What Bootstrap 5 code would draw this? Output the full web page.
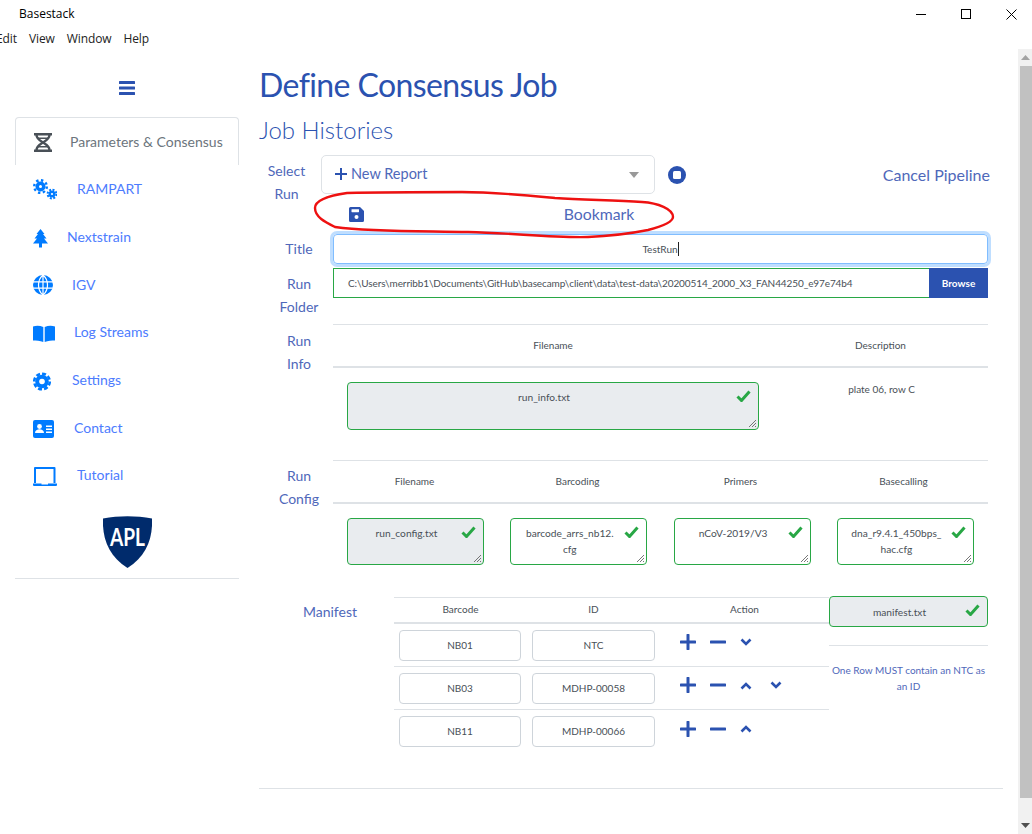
<!DOCTYPE html>
<html lang="en">
<head>
    <meta charset="UTF-8">
    <title>Basestack</title>
    <link href="https://cdn.jsdelivr.net/npm/bootstrap@5.3.0/dist/css/bootstrap.min.css" rel="stylesheet">
    <style>
        html, body {
            height: 834px;
            overflow: hidden;
        }
        body {
            font-family: Lato, sans-serif;
            background: #fff;
            color: #495057;
            font-size: 12px;
        }
        .win-title {
            height: 28px;
            font-family: "Open Sans", sans-serif;
            font-size: 12px;
            color: #000;
            padding-left: 19px;
        }
        .win-btns svg {
            display: block;
        }
        .win-btns {
            gap: 34px;
            margin-right: 15px;
        }
        .win-menu {
            height: 21px;
            font-family: "Open Sans", sans-serif;
            font-size: 12px;
            letter-spacing: -.1px;
            color: #222;
            margin-left: -4px;
            gap: 12px;
        }
        .app-area {
            height: 785px;
        }
        .scroll-track {
            width: 14px;
            background: #f1f1f1;
            margin-left: auto;
        }
        .scroll-arrow {
            height: 17px;
            flex: none;
        }
        .scroll-thumb {
            margin-left: 2px;
            height: 732px;
            background: #c1c1c1;
        }
        /* sidebar */
        .side-col {
            width: 224px;
            margin-left: 15px;
            flex: none;
        }
        .burger {
            height: 68px;
            padding-top: 9px;
        }
        .side-item {
            height: 47.7px;
            color: #4d7cfe;
            font-size: 14px;
        }
        .side-item svg {
            fill: #007bff;
        }
        .side-first {
            height: 48px;
            border: 1px solid #dee2e6;
            border-bottom: 0;
            border-radius: 4px 4px 0 0;
            color: #6c757d;
        }
        .side-ico {
            width: 40px;
            margin-left: 18px;
            flex: none;
        }
        .logo-box {
            height: 63px;
            margin-top: 17px;
            border-bottom: 1px solid #dee2e6;
        }
        /* main */
        .main-col {
            width: 744px;
            margin-left: 20px;
            flex: none;
        }
        .page-head {
            font-size: 32px;
            font-weight: 400;
            letter-spacing: -.6px;
            color: #2b52b0;
            margin: 12px 0 0;
            line-height: 48px;
        }
        .sub-head {
            font-size: 24px;
            font-weight: 300;
            color: #2b52b0;
            margin: 3px 0 0;
            line-height: 36px;
        }
        .lbl {
            color: #4f68ba;
            font-size: 14px;
            line-height: 23px;
            text-align: center;
        }
        .select-row {
            margin-top: 7px;
            height: 39px;
        }
        .select-box {
            width: 334px;
            height: 39px;
            margin-left: 13px;
            border: 1px solid #dee2e6;
            border-radius: 5px;
            padding: 0 15px 2px 13px;
            font-size: 14.5px;
            color: #4f68ba;
        }
        .caret-down {
            width: 0;
            height: 0;
            border: 5.5px solid transparent;
            border-top: 6px solid #999;
            border-bottom: 0;
            margin-top: 2px;
        }
        .bookmark-row {
            height: 40px;
            margin-left: 74px;
            padding-left: 16px;
            width: 655px;
            color: #4f68ba;
            font-size: 15.8px;
        }
        .bookmark-row span {
            margin-left: 185px;
            width: 100px;
            text-align: center;
        }
        .field-lbl {
            width: 80px;
            margin-right: -6px;
            flex: none;
        }
        .field-title {
            height: 30px;
            width: 655px;
            border: 1px solid #80bdff;
            box-shadow: 0 0 0 3px rgba(0, 123, 255, .25);
            border-radius: 4px;
            font-size: 10px;
        }
        .text-caret {
            display: inline-block;
            width: 1px;
            height: 14px;
            background: #222;
            vertical-align: -3px;
        }
        .field-path {
            height: 30px;
            width: 655px;
            border: 1px solid #28a745;
            font-size: 10px;
            letter-spacing: -.1px;
            padding-left: 14px;
        }
        .browse-btn {
            width: 59px;
            height: 30px;
            margin: -1px -1px -1px auto;
            background: #2b52b0;
            color: #fff;
            font-size: 10px;
            font-weight: 700;
            border: 0;
            border-radius: 0;
            padding: 0;
        }
        .grid-line {
            border-top: 1px solid #dee2e6;
        }
        .grid-thick {
            border-top: 2px solid #dee2e6;
        }
        .head-row {
            height: 42px;
            font-size: 10px;
        }
        .file-box {
            position: relative;
            border: 1px solid #28a745;
            border-radius: 4px;
            font-size: 10.2px;
            line-height: 16px;
            text-align: center;
            padding: 6px 24px 0 6px;
        }
        .file-grey {
            background: #e9ecef;
        }
        .file-box .tick {
            position: absolute;
            top: 7px;
            right: 7px;
        }
        .file-box .grip {
            position: absolute;
            right: 1px;
            bottom: 1px;
        }
        .cfg-box {
            width: 137px;
            height: 47px;
            flex: none;
        }
        .manifest-input {
            height: 31px;
            border: 1px solid #ced4da;
            border-radius: 4px;
            font-size: 10px;
        }
        .input-code {
            width: 122px;
            margin-left: 5px;
        }
        .input-id {
            width: 123px;
            margin-left: 11px;
        }
        .tbl-row {
            height: 43px;
            border-bottom: 1px solid #dee2e6;
        }
        .tbl-row-last {
            border-bottom: 0;
        }
        .act-cell {
            margin-left: 25px;
            margin-bottom: 6px;
        }
        .act-slot {
            width: 30px;
            height: 31px;
        }
        .note-txt {
            font-size: 10px;
            line-height: 16px;
            color: #4f68ba;
            text-align: center;
        }
        .scribble {
            position: absolute;
            left: 313px;
            top: 189px;
            pointer-events: none;
        }
    </style>
</head>
<body>

<div class="win-title d-flex align-items-center">
    <span>Basestack</span>
    <div class="win-btns d-flex align-items-center ms-auto">
        <svg width="11" height="11" viewBox="0 0 11 11"><path d="M0 5.5h10" stroke="#000" fill="none"/></svg>
        <svg width="11" height="11" viewBox="0 0 11 11"><rect x=".5" y=".5" width="9" height="9" stroke="#000" fill="none"/></svg>
        <svg width="11" height="11" viewBox="0 0 11 11"><path d="M.5.5l10 10M10.500.5l-10 10" stroke="#000" fill="none"/></svg>
    </div>
</div>
<div class="win-menu d-flex align-items-center">
    <span>Edit</span><span>View</span><span>Window</span><span>Help</span>
</div>

<div class="app-area d-flex">
    <!-- sidebar -->
    <div class="side-col">
        <div class="burger d-flex justify-content-center align-items-center">
            <svg width="16" height="14" viewBox="0 0 16 14" fill="#2b52b0"><rect y="0" width="16" height="3" rx=".5"/><rect y="5.500" width="16" height="3" rx=".5"/><rect y="11" width="16" height="3" rx=".5"/></svg>
        </div>
        <div class="side-item side-first d-flex align-items-center">
            <div class="side-ico"><svg width="18" height="19" viewBox="0 0 18 19" style="fill:none" stroke="#495057"><path stroke-width="2.400" d="M0 1.300h18M0 17.700h18M2.500 2C2.500 9.500 15.500 9.500 15.500 17M15.500 2C15.500 9.500 2.500 9.500 2.500 17"/><path stroke-width="1.400" d="M4 5.200h10M4 13.800h10"/></svg></div>
            <span style="margin-left:-4px">Parameters &amp; Consensus</span>
        </div>
        <div class="side-item d-flex align-items-center">
            <div class="side-ico"><svg width="24" height="21" viewBox="0 0 24 21"><circle cx="7.500" cy="7.500" r="5"/><circle cx="7.500" cy="7.500" r="6.300" fill="none" stroke="#007bff" stroke-width="2.400" stroke-dasharray="2.400 2.500"/><circle cx="7.500" cy="7.500" r="1.500" fill="#fff"/><circle cx="19" cy="15" r="3.500"/><circle cx="19" cy="15" r="4.400" fill="none" stroke="#007bff" stroke-width="2" stroke-dasharray="2 1.450"/><circle cx="19" cy="15" r="1.100" fill="#fff"/></svg></div>
            <span style="margin-left:4px">RAMPART</span>
        </div>
        <div class="side-item d-flex align-items-center">
            <div class="side-ico"><svg width="15" height="19" viewBox="0 0 15 19"><path d="M7.500 0l4 5h-1.500l3.500 4.500H11l4 5H9v4H6v-4H0l4-5H1.500L5 5H3.500z"/></svg></div>
            <span style="margin-left:-6px">Nextstrain</span>
        </div>
        <div class="side-item d-flex align-items-center">
            <div class="side-ico"><svg width="20" height="20" viewBox="0 0 20 20"><circle cx="10" cy="10" r="10"/><path d="M0 6.800h20M0 13.200h20M10 0c-6 5-6 15 0 20M10 0c6 5 6 15 0 20M10 0v20" stroke="#fff" stroke-width="1.200" fill="none"/></svg></div>
            <span style="margin-left:-1px">IGV</span>
        </div>
        <div class="side-item d-flex align-items-center">
            <div class="side-ico"><svg width="22" height="17" viewBox="0 0 22 17"><path d="M0 1.500C3 .5 7 .5 10.300 2v15C7 15.800 3 15.500 0 15.500zM22 1.500C19 .5 15 .5 11.700 2v15c3.300-1.200 7.300-1.500 10.300-1.500z"/></svg></div>
            <span style="margin-left:1px">Log Streams</span>
        </div>
        <div class="side-item d-flex align-items-center">
            <div class="side-ico"><svg width="18" height="19" viewBox="0 0 18 19"><circle cx="9" cy="9.500" r="6.800"/><circle cx="9" cy="9.500" r="7.800" fill="none" stroke="#007bff" stroke-width="2.600" stroke-dasharray="4 2.100"/><circle cx="9" cy="9.500" r="2.800" fill="#fff"/></svg></div>
            <span style="margin-left:-1px">Settings</span>
        </div>
        <div class="side-item d-flex align-items-center">
            <div class="side-ico"><svg width="21" height="18" viewBox="0 0 21 18"><rect width="21" height="18" rx="2"/><circle cx="6.500" cy="6.500" r="2.400" fill="#fff"/><path d="M2 13c0-5 9-5 9 0zM13 5.500h6v1.400h-6zM13 8.500h6v1.400h-6zM13 11.500h6v1.400h-6z" fill="#fff"/></svg></div>
            <span style="margin-left:1px">Contact</span>
        </div>
        <div class="side-item d-flex align-items-center">
            <div class="side-ico"><svg width="24" height="19" viewBox="0 0 24 19"><path d="M2 0h19.500a1 1 0 0 1 1 1v15h-2V2H3v14H1V1a1 1 0 0 1 1-1zM0 16.500h8.500v1H15v-1h9V18a1 1 0 0 1-1 1H1a1 1 0 0 1-1-1z"/></svg></div>
            <span style="margin-left:4px">Tutorial</span>
        </div>
        <div class="logo-box d-flex justify-content-center">
            <svg width="49" height="52" viewBox="0 0 49 52">
                <path d="M0 2.500C16-.5 33-.5 49 2.500c1 20-6 38-24.500 49.500C6 40.500-1 22.500 0 2.500z" fill="#002b6c"/>
                <text x="24.500" y="30" text-anchor="middle" fill="#fff" font-family="Lato, sans-serif" font-size="25" font-weight="700" textLength="35" lengthAdjust="spacingAndGlyphs">APL</text>
            </svg>
        </div>
    </div>

    <!-- main content -->
    <div class="main-col">
        <h1 class="page-head">Define Consensus Job</h1>
        <h3 class="sub-head">Job Histories</h3>

        <div class="select-row d-flex align-items-center">
            <div class="lbl" style="margin-left:6px;width:43px;padding-top:14px">Select Run</div>
            <div class="select-box d-flex align-items-center">
                <svg width="12" height="12" viewBox="0 0 12 12" class="me-1"><path d="M6 0v12M0 6h12" stroke="#2b52b0" stroke-width="2"/></svg>
                <span>New Report</span>
                <div class="caret-down ms-auto"></div>
            </div>
            <svg class="me-auto" width="18" height="18" viewBox="0 0 18 18" style="margin-left:13px"><circle cx="9" cy="9" r="9" fill="#2b52b0"/><rect x="5" y="5" width="8" height="8" rx="1.500" fill="#fff"/></svg>
            <span class="lbl" style="font-size:16px;margin-right:13px">Cancel Pipeline</span>
        </div>

        <div class="bookmark-row d-flex align-items-center">
            <svg width="15" height="15" viewBox="0 0 15 15"><path d="M1.500 0H11l4 4v9.500a1.500 1.500 0 0 1-1.500 1.500h-12A1.500 1.500 0 0 1 0 13.500v-12A1.500 1.500 0 0 1 1.500 0z" fill="#2b52b0"/><rect x="2.500" y="2.200" width="7.500" height="3" rx=".4" fill="#fff"/><circle cx="7.500" cy="10" r="2" fill="#fff"/></svg>
            <span>Bookmark</span>
        </div>

        <div class="d-flex">
            <div class="field-lbl lbl" style="line-height:30px">Title</div>
            <div class="field-title d-flex align-items-center justify-content-center"><span>TestRun<i class="text-caret"></i></span></div>
        </div>
        <div class="d-flex" style="margin-top:4px;height:56px">
            <div class="field-lbl lbl" style="padding-top:4px">Run<br>Folder</div>
            <div class="field-path d-flex align-items-center">
                <span>C:\Users\merribb1\Documents\GitHub\basecamp\client\data\test-data\20200514_2000_X3_FAN44250_e97e74b4</span>
                <button class="btn browse-btn" type="button">Browse</button>
            </div>
        </div>

        <!-- run info -->
        <div class="d-flex" style="height:136px">
            <div class="field-lbl lbl" style="padding-top:5px">Run<br>Info</div>
            <div style="width:655px">
                <div class="grid-line d-flex head-row align-items-center text-center">
                    <div style="width:440px">Filename</div>
                    <div class="flex-grow-1">Description</div>
                </div>
                <div class="grid-thick d-flex" style="padding:14px 0 0 14px">
                    <div class="file-box file-grey" style="width:412px;height:48px">
                        run_info.txt
                        <svg class="tick" width="15" height="12" viewBox="0 0 15 12"><path d="M1.500 6.500l4 4 8-9" stroke="#28a745" stroke-width="3" fill="none"/></svg>
                        <svg class="grip" width="9" height="9" viewBox="0 0 9 9"><path d="M8 1L1 8M8 4L4 8M8 7L7 8" stroke="#555" stroke-width=".8"/></svg>
                    </div>
                    <div class="flex-grow-1 text-center ps-3" style="font-size:10px;line-height:14px">plate 06, row C</div>
                </div>
            </div>
        </div>

        <!-- run config -->
        <div class="d-flex" style="height:136px">
            <div class="field-lbl lbl" style="padding-top:4px">Run<br>Config</div>
            <div style="width:655px">
                <div class="grid-line d-flex head-row align-items-center text-center">
                    <div style="width:163px">Filename</div>
                    <div style="width:163px">Barcoding</div>
                    <div style="width:163px">Primers</div>
                    <div style="width:163px">Basecalling</div>
                </div>
                <div class="grid-thick d-flex" style="padding:14px 0 0 14px;gap:26.300px">
                    <div class="file-box file-grey cfg-box">run_config.txt
                        <svg class="tick" width="15" height="12" viewBox="0 0 15 12"><path d="M1.500 6.500l4 4 8-9" stroke="#28a745" stroke-width="3" fill="none"/></svg>
                        <svg class="grip" width="9" height="9" viewBox="0 0 9 9"><path d="M8 1L1 8M8 4L4 8M8 7L7 8" stroke="#555" stroke-width=".8"/></svg>
                    </div>
                    <div class="file-box cfg-box">barcode_arrs_nb12.<br>cfg
                        <svg class="tick" width="15" height="12" viewBox="0 0 15 12"><path d="M1.500 6.500l4 4 8-9" stroke="#28a745" stroke-width="3" fill="none"/></svg>
                        <svg class="grip" width="9" height="9" viewBox="0 0 9 9"><path d="M8 1L1 8M8 4L4 8M8 7L7 8" stroke="#555" stroke-width=".8"/></svg>
                    </div>
                    <div class="file-box cfg-box">nCoV-2019/V3
                        <svg class="tick" width="15" height="12" viewBox="0 0 15 12"><path d="M1.500 6.500l4 4 8-9" stroke="#28a745" stroke-width="3" fill="none"/></svg>
                        <svg class="grip" width="9" height="9" viewBox="0 0 9 9"><path d="M8 1L1 8M8 4L4 8M8 7L7 8" stroke="#555" stroke-width=".8"/></svg>
                    </div>
                    <div class="file-box cfg-box">dna_r9.4.1_450bps_<br>hac.cfg
                        <svg class="tick" width="15" height="12" viewBox="0 0 15 12"><path d="M1.500 6.500l4 4 8-9" stroke="#28a745" stroke-width="3" fill="none"/></svg>
                        <svg class="grip" width="9" height="9" viewBox="0 0 9 9"><path d="M8 1L1 8M8 4L4 8M8 7L7 8" stroke="#555" stroke-width=".8"/></svg>
                    </div>
                </div>
            </div>
        </div>

        <!-- manifest -->
        <div class="d-flex" style="margin-top:1px;height:192px;border-bottom:1px solid #dee2e6">
            <div class="lbl" style="width:142px;padding-top:3px">Manifest</div>
            <div style="width:435px;margin-left:-7px">
                <div class="grid-line d-flex text-center align-items-center" style="height:25px;font-size:10px;padding-bottom:2px">
                    <div style="width:133px">Barcode</div>
                    <div style="width:133px">ID</div>
                    <div style="width:169px">Action</div>
                </div>
                <div class="grid-thick"></div>
                <div class="tbl-row d-flex align-items-center">
                    <div class="manifest-input input-code d-flex align-items-center justify-content-center">NB01</div>
                    <div class="manifest-input input-id d-flex align-items-center justify-content-center">NTC</div>
                    <div class="act-cell d-flex align-items-center">
                        <div class="act-slot d-flex align-items-center"><svg width="16" height="16" viewBox="0 0 16 16"><path d="M8 1v14M1 8h14" stroke="#2b52b0" stroke-width="3" stroke-linecap="round"/></svg></div>
                        <div class="act-slot d-flex align-items-center"><svg width="16" height="16" viewBox="0 0 16 16"><path d="M1 8h14" stroke="#2b52b0" stroke-width="3" stroke-linecap="round"/></svg></div>
                        <div class="act-slot d-flex align-items-center"><svg width="12" height="9" viewBox="0 0 12 9"><path d="M1.500 1.500L6 6l4.500-4.500" stroke="#2b52b0" stroke-width="2.600" fill="none"/></svg></div>
                    </div>
                </div>
                <div class="tbl-row d-flex align-items-center">
                    <div class="manifest-input input-code d-flex align-items-center justify-content-center">NB03</div>
                    <div class="manifest-input input-id d-flex align-items-center justify-content-center">MDHP-00058</div>
                    <div class="act-cell d-flex align-items-center">
                        <div class="act-slot d-flex align-items-center"><svg width="16" height="16" viewBox="0 0 16 16"><path d="M8 1v14M1 8h14" stroke="#2b52b0" stroke-width="3" stroke-linecap="round"/></svg></div>
                        <div class="act-slot d-flex align-items-center"><svg width="16" height="16" viewBox="0 0 16 16"><path d="M1 8h14" stroke="#2b52b0" stroke-width="3" stroke-linecap="round"/></svg></div>
                        <div class="act-slot d-flex align-items-center"><svg width="12" height="9" viewBox="0 0 12 9"><path d="M1.500 7.500L6 3l4.500 4.500" stroke="#2b52b0" stroke-width="2.600" fill="none"/></svg></div>
                        <div class="act-slot d-flex align-items-center"><svg width="12" height="9" viewBox="0 0 12 9"><path d="M1.500 1.500L6 6l4.500-4.500" stroke="#2b52b0" stroke-width="2.600" fill="none"/></svg></div>
                    </div>
                </div>
                <div class="tbl-row tbl-row-last d-flex align-items-center">
                    <div class="manifest-input input-code d-flex align-items-center justify-content-center">NB11</div>
                    <div class="manifest-input input-id d-flex align-items-center justify-content-center">MDHP-00066</div>
                    <div class="act-cell d-flex align-items-center">
                        <div class="act-slot d-flex align-items-center"><svg width="16" height="16" viewBox="0 0 16 16"><path d="M8 1v14M1 8h14" stroke="#2b52b0" stroke-width="3" stroke-linecap="round"/></svg></div>
                        <div class="act-slot d-flex align-items-center"><svg width="16" height="16" viewBox="0 0 16 16"><path d="M1 8h14" stroke="#2b52b0" stroke-width="3" stroke-linecap="round"/></svg></div>
                        <div class="act-slot d-flex align-items-center"><svg width="12" height="9" viewBox="0 0 12 9"><path d="M1.500 7.500L6 3l4.500 4.500" stroke="#2b52b0" stroke-width="2.600" fill="none"/></svg></div>
                    </div>
                </div>
            </div>
            <div style="width:159px">
                <div class="file-box file-grey" style="height:31px;padding-top:7px;margin-top:-1px">manifest.txt
                    <svg class="tick" width="15" height="12" viewBox="0 0 15 12"><path d="M1.500 6.500l4 4 8-9" stroke="#28a745" stroke-width="3" fill="none"/></svg>
                </div>
                <div class="grid-line note-txt" style="margin-top:18px;padding-top:16px">One Row MUST contain an NTC as<br>an ID</div>
            </div>
        </div>
    </div>

    <div class="scroll-track d-flex flex-column">
        <div class="scroll-arrow d-flex align-items-center justify-content-center"><svg width="9" height="5" viewBox="0 0 9 5"><path d="M4.500 0L9 5H0z" fill="#a3a3a3"/></svg></div>
        <div class="scroll-thumb"></div>
        <div class="scroll-arrow d-flex align-items-center justify-content-center mt-auto"><svg width="9" height="5" viewBox="0 0 9 5"><path d="M4.500 5L9 0H0z" fill="#505050"/></svg></div>
    </div>
</div>

<!-- hand drawn annotation over the page -->
<svg class="scribble" width="364" height="52" viewBox="0 0 364 52">
    <path d="M34 4C20 6 2 10 2 19C2 28 12 33 22 38C60 43 110 42 155 43C200 44 240 49 275 48C300 47 320 44 335 41C350 37 360 33 360 28C360 20 345 14 329 13C300 11 270 11 242 9C210 6 180 3 149 3C110 3 70 3 34 4Z" fill="none" stroke="#ee1111" stroke-width="2.400"/>
</svg>

<script src="https://cdn.jsdelivr.net/npm/bootstrap@5.3.0/dist/js/bootstrap.bundle.min.js"></script>
</body>
</html>
